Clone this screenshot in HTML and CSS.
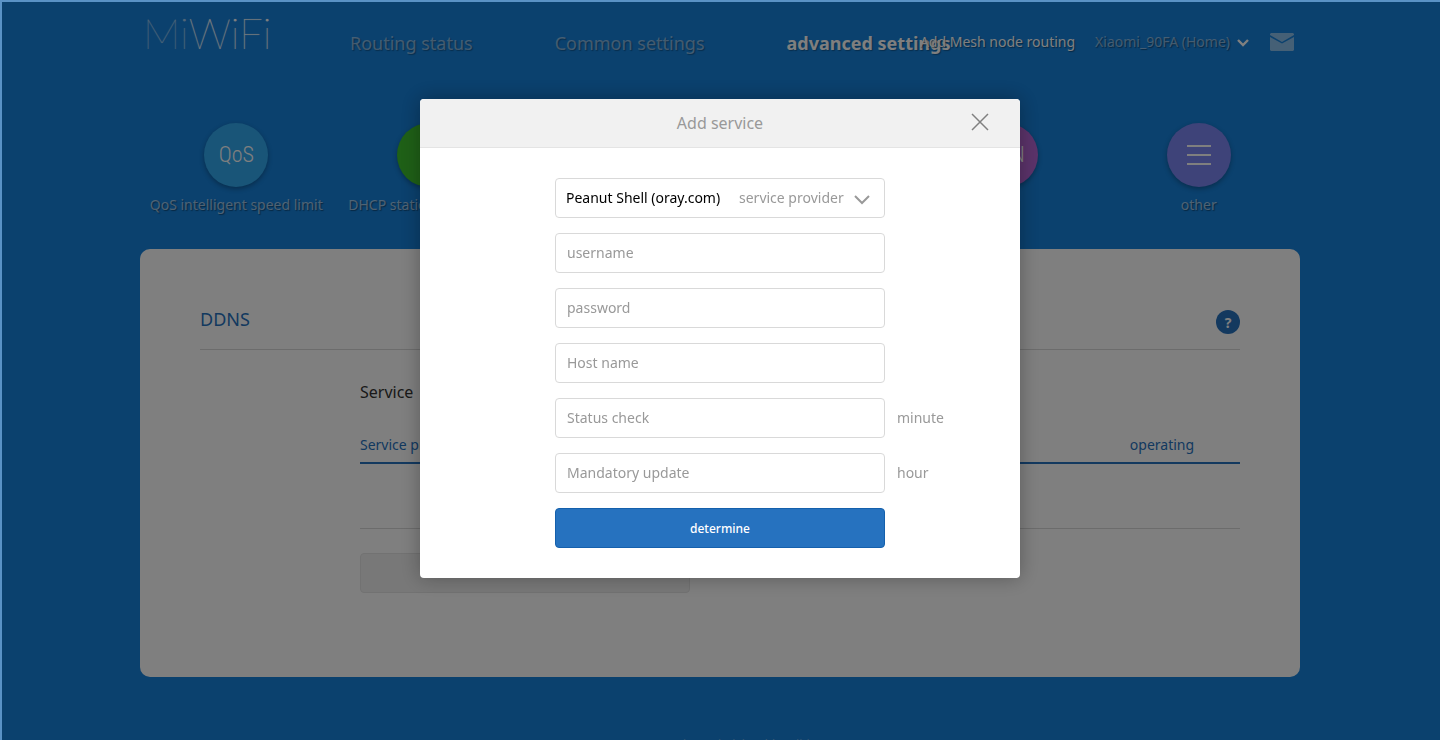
FILE: index.html
```html
<!DOCTYPE html>
<html lang="en">
<head>
    <meta charset="UTF-8">
    <meta name="viewport" content="width=device-width, initial-scale=1.0">
    <title>MiWiFi</title>
    <link rel="stylesheet" href="styles.css">
</head>
<body>
    <div class="page">
        <header class="header">
            <a href="#" class="logo"><span class="logo-mi">Mi</span>WiFi</a>
            <nav class="nav-menu">
                <a href="#">Routing status</a>
                <a href="#">Common settings</a>
                <a href="#" class="active">advanced settings</a>
            </nav>
            <div class="user-bar">
                <a href="#" class="mesh">Add Mesh node routing</a>
                <a href="#" class="router">Xiaomi_90FA (Home)
                    <svg width="14" height="10" viewBox="0 0 14 10"><path d="M2 3l5 5 5-5" fill="none" stroke="#fff" stroke-width="2.4"/></svg>
                </a>
                <a href="#" class="mail" aria-label="Messages">
                    <svg width="24" height="18" viewBox="0 0 24 18"><path d="M1 0h22l1 1v1L12 9 0 2V1z"/><path d="M0 4l12 6.500L24 4v13l-1 1H1l-1-1z"/></svg>
                </a>
            </div>
        </header>

        <nav class="sub-menu">
            <a href="#"><span class="circle qos">QoS</span>QoS intelligent speed limit</a>
            <a href="#"><span class="circle dhcp">IP</span>DHCP static IP allocation</a>
            <a href="#"><span class="circle ddns">DDNS</span>DDNS</a>
            <a href="#"><span class="circle port">Port</span>Port forwarding</a>
            <a href="#"><span class="circle vpn">VPN</span>VPN</a>
            <a href="#"><span class="circle other">
                <svg width="24" height="20" viewBox="0 0 24 20"><path d="M0 1h24M0 10h24M0 19h24" stroke="#fff" stroke-width="2"/></svg>
            </span>other</a>
        </nav>

        <main class="panel">
            <div class="panel-head">
                <h2>DDNS</h2>
                <button type="button" class="help" aria-label="Help">?</button>
            </div>
            <section class="panel-body">
                <h3>Service</h3>
                <table class="service-table">
                    <thead>
                        <tr>
                            <th>Service provider</th>
                            <th>Host name</th>
                            <th>Status</th>
                            <th class="col-op">operating</th>
                        </tr>
                    </thead>
                    <tbody>
                        <tr><td colspan="4"></td></tr>
                    </tbody>
                </table>
                <button type="button" class="button button-gray">Add service</button>
            </section>
        </main>

        <footer class="footer">System version: MiWiFi stable edition</footer>
    </div>

    <!-- dialog -->
    <div class="overlay">
        <div class="dialog" role="dialog" aria-labelledby="dialogTitle">
            <div class="dialog-head">
                <h1 id="dialogTitle">Add service</h1>
                <button type="button" class="close" aria-label="Close">
                    <svg width="18" height="18" viewBox="0 0 18 18"><path d="M1 1l16 16M17 1L1 17" stroke="#808080" stroke-width="1.500"/></svg>
                </button>
            </div>
            <form class="dialog-form">
                <div class="field">
                    <select id="provider">
                        <option>Peanut Shell (oray.com)</option>
                    </select>
                    <label for="provider" class="select-label">service provider
                        <svg width="16" height="14" viewBox="0 0 16 14"><path d="M1 5l7 7 7-7" fill="none" stroke="#999" stroke-width="2"/></svg>
                    </label>
                </div>
                <div class="field"><input type="text" placeholder="username" aria-label="username"></div>
                <div class="field"><input type="password" placeholder="password" aria-label="password"></div>
                <div class="field"><input type="text" placeholder="Host name" aria-label="Host name"></div>
                <div class="field">
                    <input type="text" id="check" placeholder="Status check" aria-label="Status check">
                    <label for="check">minute</label>
                </div>
                <div class="field">
                    <input type="text" id="update" placeholder="Mandatory update" aria-label="Mandatory update">
                    <label for="update">hour</label>
                </div>
                <button type="submit" class="button">determine</button>
            </form>
        </div>
    </div>
</body>
</html>
```
FILE: styles.css
```css
* {
    margin: 0;
    padding: 0;
    box-sizing: border-box;
}

body {
    font-family: "Noto Sans", "Open Sans", sans-serif;
    font-size: 14px;
    line-height: 20px;
    background-color: #1682dc;
    color: #333;
    height: 100vh;
    overflow: hidden;
}

a {
    color: inherit;
    text-decoration: none;
}

svg {
    display: block;
}

button {
    font-family: inherit;
    cursor: pointer;
}

.page {
    max-width: 1160px;
    margin: 0 auto;
}

/* header */
.header {
    position: relative;
    display: flex;
    align-items: center;
    height: 86px;
    padding-left: 3px;
    color: #fff;
}

.logo {
    width: 166px;
    padding-bottom: 20px;
    font-family: Lato, sans-serif;
    font-weight: 100;
    font-size: 42px;
    line-height: 48px;
    text-shadow: 0 0 1px #fff;
}

.logo-mi {
    opacity: 0.6;
}

.nav-menu {
    display: flex;
    font-size: 18px;
    text-shadow: 1px 1px 1px rgba(0,0,0,0.3);
}

.nav-menu a {
    padding: 0 41px;
    color: rgba(255,255,255,0.5);
    white-space: nowrap;
}

.nav-menu .active {
    color: #fff;
    font-weight: bold;
}

.user-bar {
    position: absolute;
    top: 32px;
    right: 6px;
    display: flex;
    align-items: center;
    gap: 20px;
    text-shadow: 1px 1px 1px rgba(0,0,0,0.4);
}

.router {
    display: flex;
    align-items: center;
    gap: 6px;
    color: rgba(255,255,255,0.5);
}

.mail {
    fill: #fff;
    opacity: 0.5;
}

/* sub menu */
.sub-menu {
    display: flex;
    padding: 37px 5px 34px 0;
    color: rgba(255,255,255,0.6);
    text-shadow: 1px 1px 1px rgba(0,0,0,0.4);
}

.sub-menu a {
    flex: 1 0 0;
    display: flex;
    flex-direction: column;
    align-items: center;
    gap: 8px;
    white-space: nowrap;
}

.circle {
    display: flex;
    align-items: center;
    justify-content: center;
    width: 64px;
    height: 64px;
    border-radius: 50%;
    box-shadow: 0 2px 5px rgba(0,0,0,0.3);
    color: #fff;
    font-family: "Roboto Condensed", Roboto, sans-serif;
    font-weight: 300;
    font-size: 22px;
    text-shadow: none;
}

.qos { background: #32aaf0; }
.dhcp { background: #3ec02e; }
.ddns { background: #f0a030; }
.port { background: #30b0a0; }
.vpn { background: #b666d4; }
.other { background: #7c86f2; }

/* panel */
.panel {
    padding: 50px 60px 84px;
    background: #fff;
    border-radius: 10px;
}

.panel-head {
    display: flex;
    align-items: flex-end;
    justify-content: space-between;
    height: 51px;
    padding-bottom: 15px;
    border-bottom: 1px solid #d9d9d9;
}

.panel-head h2 {
    font-size: 18px;
    font-weight: normal;
    line-height: 30px;
    color: #2672bf;
}

.help {
    width: 24px;
    height: 24px;
    border: none;
    border-radius: 50%;
    background: #2672bf;
    color: #fff;
    font-size: 14px;
    font-weight: bold;
}

.panel-body {
    padding: 32px 0 0 160px;
}

.panel-body h3 {
    font-size: 16px;
    font-weight: normal;
}

.service-table {
    width: 100%;
    margin: 24px 0;
    border-collapse: collapse;
    color: #2672bf;
}

.service-table th {
    height: 37px;
    padding-top: 2px;
    border-bottom: 2px solid #2672bf;
    font-weight: normal;
    text-align: left;
}

.service-table .col-op {
    width: 156px;
    text-align: center;
}

.service-table td {
    height: 65px;
    border-bottom: 1px solid #d9d9d9;
}

.footer {
    padding-top: 58px;
    text-align: center;
    font-size: 12px;
    color: rgba(255,255,255,0.4);
}

.button {
    display: block;
    width: 330px;
    height: 40px;
    border: 1px solid #1560ac;
    border-radius: 4px;
    background: #2672bf;
    color: #fff;
    font-size: 12px;
    font-weight: 500;
}

.button-gray {
    border-color: #e4e4e4;
    background: #f1f1f1;
    color: #999;
}

/* dialog */
.overlay {
    position: fixed;
    inset: 0;
    display: flex;
    align-items: flex-start;
    justify-content: center;
    padding-top: 99px;
    background: rgba(0,0,0,0.5);
    box-shadow: inset 2px 2px 0 #5a92c5;
}

.dialog {
    width: 600px;
    border-radius: 4px;
    background: #fff;
    box-shadow: 0 0 20px rgba(0,0,0,0.3);
    overflow: hidden;
}

.dialog-head {
    position: relative;
    height: 49px;
    border-bottom: 1px solid #e4e4e4;
    background: #f1f1f1;
    color: #999;
    text-align: center;
}

.dialog-head h1 {
    font-size: 16px;
    font-weight: normal;
    line-height: 48px;
}

.close {
    position: absolute;
    top: 14px;
    right: 31px;
    border: none;
    background: none;
}

.dialog-form {
    display: flex;
    flex-direction: column;
    gap: 15px;
    padding: 30px 0 30px 135px;
}

.field {
    position: relative;
    display: flex;
    align-items: center;
    gap: 12px;
    color: #999;
}

.field input,
.field select {
    width: 330px;
    height: 40px;
    padding: 0 11px 2px;
    border: 1px solid #d9d9d9;
    border-radius: 4px;
    background: #fff;
    color: #000;
    font-family: inherit;
    font-size: 14px;
    appearance: none;
}

.field select {
    padding: 0 10px 2px;
}

.field input::placeholder {
    color: #999;
}

.select-label {
    position: absolute;
    left: 184px;
    display: flex;
    align-items: center;
    gap: 10px;
    pointer-events: none;
}
```
